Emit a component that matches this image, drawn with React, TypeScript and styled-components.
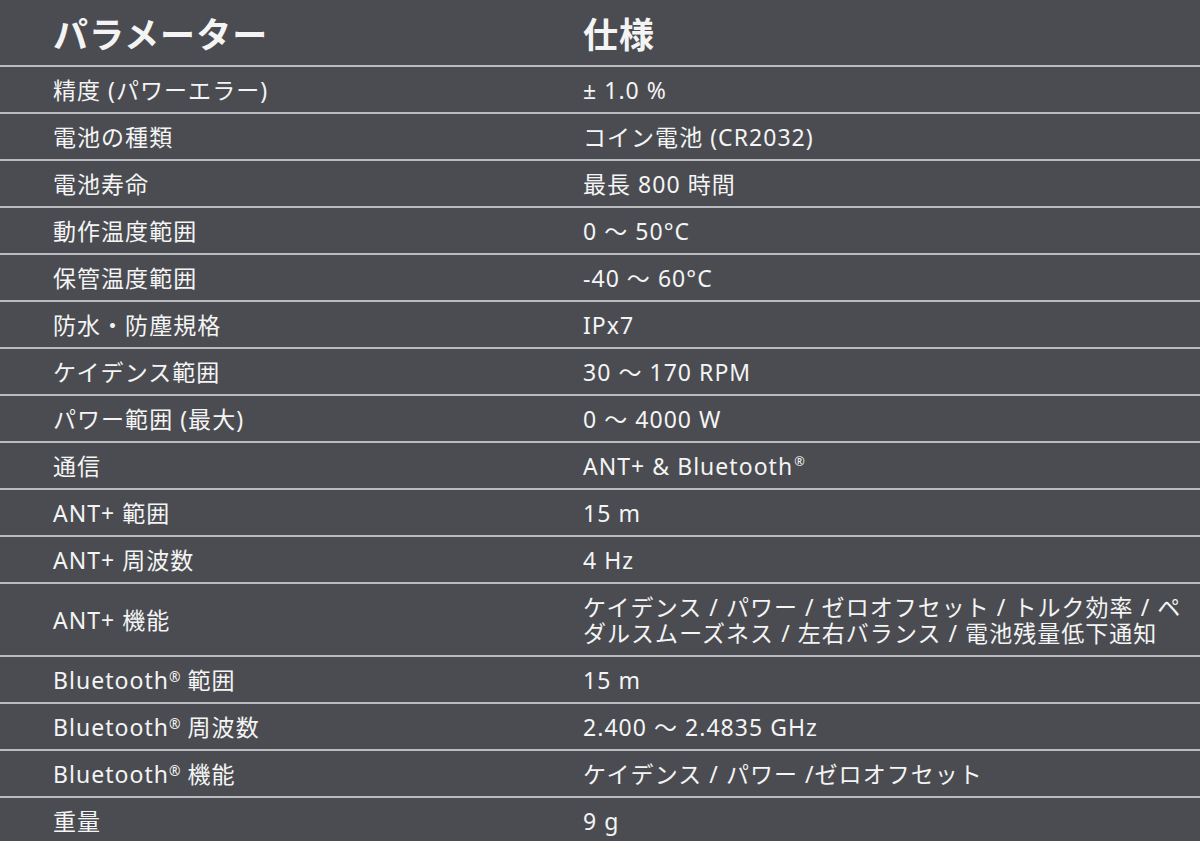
import React from "react";
import styled, { createGlobalStyle } from "styled-components";

const GlobalStyle = createGlobalStyle`
  html, body {
    margin: 0;
    padding: 0;
    background-color: #4a4c51;
  }
  body {
    font-family: "Noto Sans", "Noto Sans CJK JP", sans-serif;
    color: #f4f4f4;
  }
`;

interface Spec {
  name: React.ReactNode;
  value: React.ReactNode;
}

const Table = styled.table`
  width: 1200px;
  border-collapse: collapse;
  table-layout: fixed;
  background-color: #4a4c51;
`;

const HeadCell = styled.th`
  text-align: left;
  font-size: 35px;
  font-weight: 700;
  line-height: 43px;
  padding: 13px 5px 9px 53px;
  letter-spacing: 0.03em;
  border-bottom: 2px solid #b9bbbe;
`;

const Cell = styled.td`
  font-size: 23px;
  line-height: 26px;
  padding: 9.5px 6px 9.5px 53px;
  vertical-align: middle;
  border-bottom: 2px solid #b9bbbe;
  letter-spacing: 0.045em;
`;

const Row = styled.tr<{ $last?: boolean }>`
  ${Cell} {
    border-bottom-width: ${(p) => (p.$last ? "0" : "2px")};
  }
`;

const Sup = styled.span`
  font-size: 0.55em;
  vertical-align: 0.7em;
  line-height: 0;
  margin-left: 1px;
`;

const Mark = styled.span`
  font-size: 0.6em;
  vertical-align: 0.45em;
  line-height: 0;
  margin-right: 6px;
`;

const specs: Spec[] = [
  { name: "精度 (パワーエラー)", value: "± 1.0 %" },
  { name: "電池の種類", value: "コイン電池 (CR2032)" },
  { name: "電池寿命", value: "最長 800 時間" },
  { name: "動作温度範囲", value: "0 〜 50°C" },
  { name: "保管温度範囲", value: "-40 〜 60°C" },
  { name: "防水・防塵規格", value: "IPx7" },
  { name: "ケイデンス範囲", value: "30 〜 170 RPM" },
  { name: "パワー範囲 (最大)", value: "0 〜 4000 W" },
  {
    name: "通信",
    value: (
      <>
        ANT+ &amp; Bluetooth<Sup>®</Sup>
      </>
    ),
  },
  { name: "ANT+ 範囲", value: "15 m" },
  { name: "ANT+ 周波数", value: "4 Hz" },
  {
    name: "ANT+ 機能",
    value:
      "ケイデンス / パワー / ゼロオフセット / トルク効率 / ペダルスムーズネス / 左右バランス / 電池残量低下通知",
  },
  {
    name: (
      <>
        Bluetooth<Mark>®</Mark>範囲
      </>
    ),
    value: "15 m",
  },
  {
    name: (
      <>
        Bluetooth<Mark>®</Mark>周波数
      </>
    ),
    value: "2.400 〜 2.4835 GHz",
  },
  {
    name: (
      <>
        Bluetooth<Mark>®</Mark>機能
      </>
    ),
    value: "ケイデンス / パワー /ゼロオフセット",
  },
  { name: "重量", value: "9 g" },
];

export default function App() {
  return (
    <>
      <GlobalStyle />
      <Table>
        <colgroup>
          <col style={{ width: 530 }} />
          <col />
        </colgroup>
        <thead>
          <tr>
            <HeadCell>パラメーター</HeadCell>
            <HeadCell>仕様</HeadCell>
          </tr>
        </thead>
        <tbody>
          {specs.map((s, i) => (
            <Row key={i} $last={i === specs.length - 1}>
              <Cell>{s.name}</Cell>
              <Cell>{s.value}</Cell>
            </Row>
          ))}
        </tbody>
      </Table>
    </>
  );
}
